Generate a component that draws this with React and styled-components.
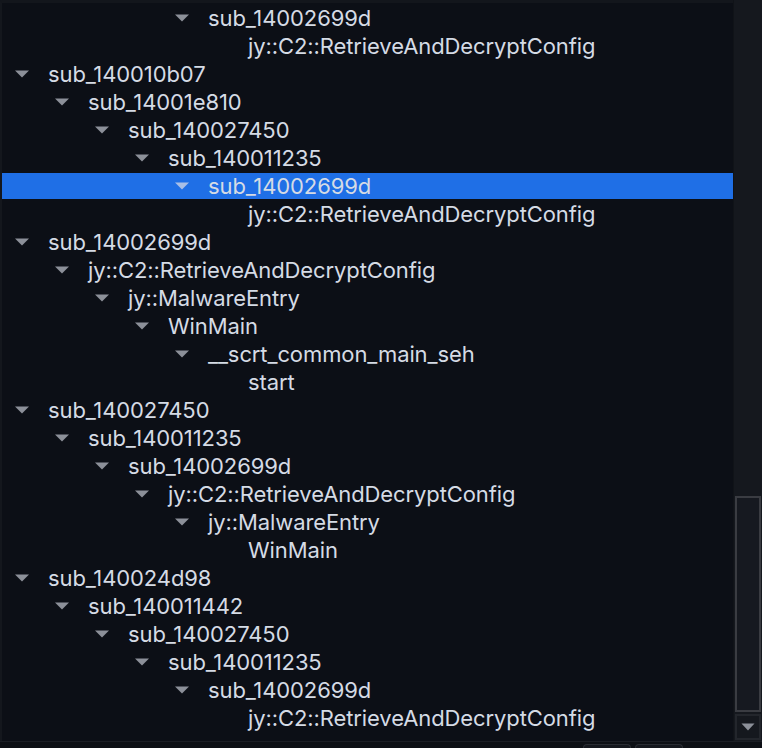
import React from "react";
import styled, { createGlobalStyle } from "styled-components";

const GlobalStyle = createGlobalStyle`
  html, body {
    margin: 0;
    padding: 0;
    background: #0c0f16;
  }
  body {
    font-family: Inter, "Noto Sans", sans-serif;
  }
`;

const Panel = styled.div`
  width: 762px;
  height: 748px;
  display: flex;
  flex-direction: column;
  background: #0c0f16;
  overflow: hidden;
`;

const Body = styled.div`
  flex: 1;
  display: flex;
  min-height: 0;
`;

const TreeArea = styled.div`
  flex: 1;
  display: flex;
  flex-direction: column;
  border-left: 2px solid #14171d;
  border-top: 3px solid #13161c;
  padding-top: 1px;
  overflow: hidden;
`;

const Row = styled.div`
  height: 26px;
  margin: 1px 0;
  flex-shrink: 0;
  display: flex;
  align-items: center;
  padding-left: ${p => 12 + p.level * 40}px;
  background: ${p => (p.selected ? "#1f6fe6" : "transparent")};
  color: #d5dbe5;
  font-size: 22px;
  letter-spacing: -0.1px;
  white-space: nowrap;
`;

const Toggle = styled.span`
  width: 16px;
  height: 8px;
  margin-right: 18px;
  display: flex;
  flex-shrink: 0;

  svg {
    display: block;
  }
`;

const Label = styled.span`
  line-height: 26px;
`;

const ScrollBar = styled.div`
  width: 28px;
  display: flex;
  flex-direction: column;
  background: #15181e;
  border-left: 1px solid #101318;
`;

const Track = styled.div`
  flex: 1;
  display: flex;
  flex-direction: column;
  justify-content: flex-end;
`;

const Thumb = styled.div`
  height: 212px;
  margin: 0 1px 2px 1px;
  border: 2px solid #3a3c42;
  background: #161920;
`;

const ArrowButton = styled.div`
  height: 22px;
  margin: 0 1px 1px 1px;
  border: 2px solid #23262c;
  background: #15181e;
  display: flex;
  align-items: center;
  justify-content: center;
`;

const Footer = styled.div`
  height: 6px;
  border-top: 1px solid #1b1e24;
  background: #0d1015;
  display: flex;
  align-items: flex-end;
  padding-left: 583px;
  gap: 4px;
`;

const Tab = styled.div`
  width: 46px;
  height: 3px;
  border: 1px solid #2a2d33;
  border-bottom: none;
  border-radius: 5px 5px 0 0;
  background: #15181e;
`;

const rows = [
  { level: 4, label: "sub_14002699d" },
  { level: 5, label: "jy::C2::RetrieveAndDecryptConfig", leaf: true },
  { level: 0, label: "sub_140010b07" },
  { level: 1, label: "sub_14001e810" },
  { level: 2, label: "sub_140027450" },
  { level: 3, label: "sub_140011235" },
  { level: 4, label: "sub_14002699d", selected: true },
  { level: 5, label: "jy::C2::RetrieveAndDecryptConfig", leaf: true },
  { level: 0, label: "sub_14002699d" },
  { level: 1, label: "jy::C2::RetrieveAndDecryptConfig" },
  { level: 2, label: "jy::MalwareEntry" },
  { level: 3, label: "WinMain" },
  { level: 4, label: "__scrt_common_main_seh" },
  { level: 5, label: "start", leaf: true },
  { level: 0, label: "sub_140027450" },
  { level: 1, label: "sub_140011235" },
  { level: 2, label: "sub_14002699d" },
  { level: 3, label: "jy::C2::RetrieveAndDecryptConfig" },
  { level: 4, label: "jy::MalwareEntry" },
  { level: 5, label: "WinMain", leaf: true },
  { level: 0, label: "sub_140024d98" },
  { level: 1, label: "sub_140011442" },
  { level: 2, label: "sub_140027450" },
  { level: 3, label: "sub_140011235" },
  { level: 4, label: "sub_14002699d" },
  { level: 5, label: "jy::C2::RetrieveAndDecryptConfig", leaf: true }
];

function Caret({ color = "#8c9099" }) {
  return (
    <svg width="16" height="8" viewBox="0 0 16 8">
      <polygon points="1,0.5 15,0.5 8,7.5" fill={color} />
    </svg>
  );
}

export default function App() {
  return (
    <>
      <GlobalStyle />
      <Panel>
        <Body>
          <TreeArea>
            {rows.map((row, i) => (
              <Row key={i} level={row.level} selected={row.selected}>
                <Toggle>{!row.leaf && <Caret color={row.selected ? "#a9bfe6" : "#8c9099"} />}</Toggle>
                <Label>{row.label}</Label>
              </Row>
            ))}
          </TreeArea>
          <ScrollBar>
            <Track>
              <Thumb />
            </Track>
            <ArrowButton>
              <svg width="14" height="8" viewBox="0 0 14 8">
                <polygon points="0.5,0.5 13.5,0.5 7,7.5" fill="#8c9099" />
              </svg>
            </ArrowButton>
          </ScrollBar>
        </Body>
        <Footer>
          <Tab />
          <Tab />
        </Footer>
      </Panel>
    </>
  );
}
